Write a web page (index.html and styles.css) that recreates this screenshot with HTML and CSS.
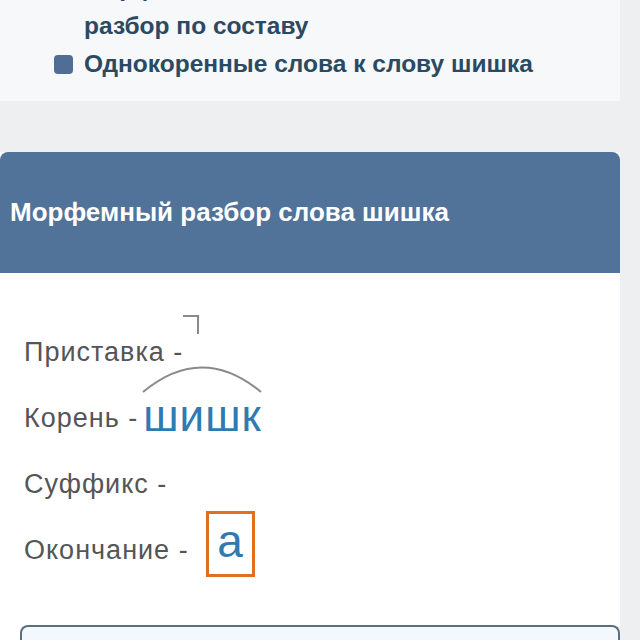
FILE: index.html
```html
<!DOCTYPE html>
<html lang="ru">
<head>
    <meta charset="UTF-8">
    <meta name="viewport" content="width=device-width, initial-scale=1.0">
    <title>Морфемный разбор слова шишка</title>
    <link rel="stylesheet" href="styles.css">
</head>
<body>

    <div class="contents">
        <div class="contents-item">Морфологический и синтаксический</div>
        <div class="contents-item">разбор по составу</div>
        <div class="contents-item bullet">Однокоренные слова к слову шишка</div>
    </div>

    <div class="card">
        <div class="card-header">Морфемный разбор слова шишка</div>
        <div class="card-body">
            <div class="morpheme">
                Приставка -
                <span class="prefix"></span>
            </div>
            <div class="morpheme">
                Корень -
                <span class="root">шишк
                    <svg class="arc" width="120" height="28" viewBox="0 0 120 28">
                        <path d="M1 27 Q60 -22 119 27" fill="none" stroke="#8a8a8a" stroke-width="2"/>
                    </svg>
                </span>
            </div>
            <div class="morpheme">Суффикс -</div>
            <div class="morpheme">
                Окончание -
                <span class="ending">а</span>
            </div>
        </div>
        <div class="note"></div>
    </div>

</body>
</html>
```

FILE: styles.css
```css
body {
    margin: 0;
    background-color: #eeeff1;
    font-family: "Liberation Sans", Arial, sans-serif;
    height: 640px;
    overflow: hidden;
}

.contents {
    width: 620px;
    height: 132px;
    background-color: #f6f8fa;
    padding-left: 84px;
    box-sizing: border-box;
    margin-top: -31px;
    margin-bottom: 51px;
}

.contents-item {
    position: relative;
    height: 38px;
    line-height: 38px;
    font-size: 24.5px;
    font-weight: bold;
    color: #2b4a62;
    white-space: nowrap;
}

.contents-item.bullet::before {
    content: "";
    position: absolute;
    left: -30px;
    top: 10px;
    width: 19px;
    height: 19px;
    border-radius: 4px;
    background-color: #4f6d95;
}

.card {
    width: 620px;
    background-color: #fff;
}

.card-header {
    height: 121px;
    line-height: 121px;
    padding-left: 10px;
    background-color: #517299;
    color: #fff;
    font-size: 26px;
    font-weight: bold;
    border-radius: 8px 8px 0 0;
}

.card-body {
    padding: 46px 0 0 24px;
    color: #555;
    font-size: 27px;
    letter-spacing: 1px;
}

.morpheme {
    display: flex;
    align-items: center;
    height: 66px;
    gap: 8px;
}

.prefix {
    position: relative;
    width: 20px;
    height: 30px;
    margin-left: -8px;
}

.prefix::after {
    content: "";
    position: absolute;
    left: 0;
    top: -22px;
    width: 14px;
    height: 17px;
    border-top: 2px solid #8a8a8a;
    border-right: 2px solid #8a8a8a;
}

.root {
    position: relative;
    color: #2f7bb1;
    font-size: 44px;
    letter-spacing: 1px;
    line-height: 1;
    margin-top: -4px;
    margin-left: -3px;
}

.arc {
    position: absolute;
    left: -1px;
    top: -29px;
}

.ending {
    margin-left: 9px;
    margin-top: -12px;
    width: 43px;
    height: 60px;
    border: 3px solid #e0701f;
    color: #2f7bb1;
    font-size: 46px;
    letter-spacing: 0;
    line-height: 54px;
    text-align: center;
}

.note {
    margin: 42px 0 0 20px;
    height: 30px;
    border: 2px solid #5b6f7f;
    border-bottom: none;
    border-radius: 8px 8px 0 0;
    background-color: #f2f8fd;
}
```
